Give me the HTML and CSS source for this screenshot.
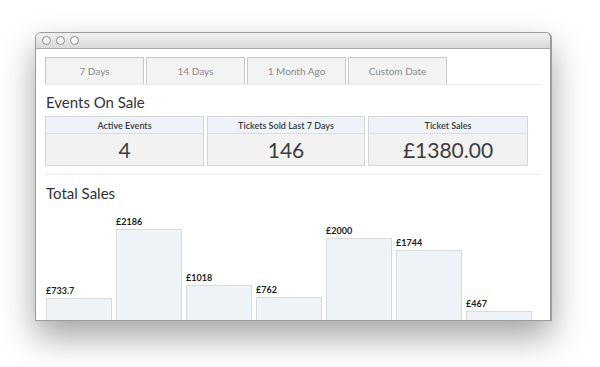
FILE: index.html
```html
<!DOCTYPE html>
<html>
<head>
<meta charset="utf-8">
<link rel="stylesheet" href="styles.css">
</head>
<body>
<div class="window">
  <div class="titlebar">
    <span class="dot"></span><span class="dot"></span><span class="dot"></span>
  </div>
  <div class="content">
    <div class="tabs">
      <div class="tab">7 Days</div>
      <div class="tab">14 Days</div>
      <div class="tab">1 Month Ago</div>
      <div class="tab">Custom Date</div>
    </div>
    <h2 class="heading">Events On Sale</h2>
    <div class="stats">
      <div class="stat"><div class="stat-label">Active Events</div><div class="stat-value">4</div></div>
      <div class="stat"><div class="stat-label">Tickets Sold Last 7 Days</div><div class="stat-value">146</div></div>
      <div class="stat"><div class="stat-label">Ticket Sales</div><div class="stat-value">£1380.00</div></div>
    </div>
    <div class="sep"></div>
    <h2 class="heading heading-sales">Total Sales</h2>
    <div class="chart">
      <div class="col"><div class="val">£733.7</div><div class="bar" style="height:35px"></div></div>
      <div class="col"><div class="val">£2186</div><div class="bar" style="height:104px"></div></div>
      <div class="col"><div class="val">£1018</div><div class="bar" style="height:48px"></div></div>
      <div class="col"><div class="val">£762</div><div class="bar" style="height:36px"></div></div>
      <div class="col"><div class="val">£2000</div><div class="bar" style="height:95px"></div></div>
      <div class="col"><div class="val">£1744</div><div class="bar" style="height:83px"></div></div>
      <div class="col"><div class="val">£467</div><div class="bar" style="height:22px"></div></div>
    </div>
  </div>
</div>
</body>
</html>
```
FILE: styles.css
```css
html, body {
  margin: 0;
  padding: 0;
  background: #fff;
}
body {
  width: 600px;
  height: 367px;
  overflow: hidden;
  font-family: Lato, "Open Sans", sans-serif;
  padding-top: 32px;
  box-sizing: border-box;
}
.window {
  margin-left: 35px;
  width: 517px;
  height: 289px;
  box-sizing: border-box;
  border: 1px solid #9c9c9c;
  border-right-width: 2px;
  border-radius: 6px 6px 0 0;
  background: #fff;
  overflow: hidden;
  box-shadow: 0 16px 34px rgba(0, 0, 0, 0.36);
}
.titlebar {
  height: 15px;
  background: linear-gradient(#f0f0f0, #d9d9d9);
  border-bottom: 1px solid #a8a8a8;
  display: flex;
  align-items: center;
  padding-left: 6px;
  gap: 5px;
}
.dot {
  width: 7px;
  height: 7px;
  border-radius: 50%;
  border: 1px solid #8e8e8e;
  background: #f4f4f4;
}
.content {
  padding: 8px 9px 0 9px;
}
.tabs {
  display: flex;
  gap: 2px;
  border-bottom: 1px solid #ececec;
}
.tab {
  width: 97px;
  height: 25px;
  border: 1px solid #c8c8c8;
  border-bottom: none;
  background: #f3f3f3;
  color: #8a8a8a;
  font-size: 10px;
  display: flex;
  align-items: center;
  justify-content: center;
  padding-bottom: 1px;
  box-sizing: content-box;
}
.heading {
  margin: 8px 0 5px 1px;
  font-size: 15px;
  line-height: 18px;
  font-weight: 400;
  color: #333;
}
.stats {
  display: grid;
  grid-template-columns: 159px 158px 160px;
  gap: 3px;
}
.stat {
  border: 1px solid #d6d6d6;
  background: #f2f2f2;
}
.stat-label {
  height: 16px;
  background: #edf3f8;
  border-bottom: 1px solid #dcdcdc;
  font-size: 9px;
  font-weight: 600;
  color: #3a3a3a;
  display: flex;
  align-items: center;
  justify-content: center;
}
.stat-value {
  height: 31px;
  font-size: 21px;
  color: #3d3d3d;
  display: flex;
  align-items: center;
  justify-content: center;
}
.sep {
  margin-top: 8px;
  border-top: 1px solid #ededed;
}
.heading-sales {
  margin-top: 9px;
  margin-bottom: 0;
}
.chart {
  display: flex;
  align-items: flex-end;
  gap: 4px;
  height: 131px;
  padding-left: 1px;
}
.col {
  width: 66px;
  display: flex;
  flex-direction: column;
}
.val {
  font-size: 9px;
  font-weight: 700;
  line-height: 10px;
  color: #222;
  margin-bottom: 2px;
}
.bar {
  box-sizing: border-box;
  border: 1px solid #dadada;
  background: #eef3f8;
}
```
